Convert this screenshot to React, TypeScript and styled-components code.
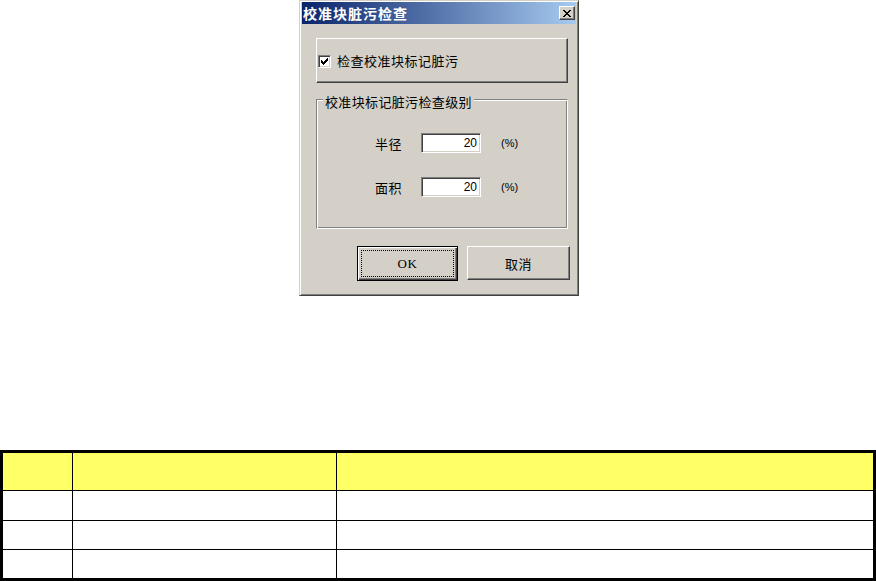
import React from "react";
import styled, { createGlobalStyle } from "styled-components";

const GlobalStyle = createGlobalStyle`
  html, body {
    margin: 0;
    padding: 0;
    background: #ffffff;
  }
  body {
    font-family: "Noto Sans CJK SC", "Liberation Sans", sans-serif;
    color: #000;
  }
`;

const Page = styled.div`
  width: 876px;
  height: 581px;
  display: flex;
  flex-direction: column;
  overflow: hidden;
`;

const Dialog = styled.div`
  width: 280px;
  height: 296px;
  box-sizing: border-box;
  margin-left: 299px;
  background: #d4d0c8;
  border: 1px solid;
  border-color: #d4d0c8 #404040 #404040 #d4d0c8;
  box-shadow: inset 1px 1px 0 #ffffff, inset -1px -1px 0 #808080;
  padding: 1px 2px 2px 2px;
  display: flex;
  flex-direction: column;
`;

const TitleBar = styled.div`
  height: 22px;
  flex-shrink: 0;
  display: flex;
  align-items: center;
  justify-content: space-between;
  padding-left: 1px;
  background: linear-gradient(to right, #0a246a, #a6caf0);
`;

const Title = styled.span`
  color: #ffffff;
  font-size: 14px;
  font-weight: 700;
  letter-spacing: 1px;
  line-height: 22px;
`;

const CloseButton = styled.div`
  width: 16px;
  height: 14px;
  box-sizing: border-box;
  margin-right: 1px;
  background: #d4d0c8;
  border: 1px solid;
  border-color: #ffffff #404040 #404040 #ffffff;
  box-shadow: inset -1px -1px 0 #808080;
  display: flex;
  align-items: center;
  justify-content: center;
`;

const Body = styled.div`
  flex: 1;
  display: flex;
  flex-direction: column;
  padding: 14px 8px 0 14px;
`;

const CheckButton = styled.div`
  height: 45px;
  box-sizing: border-box;
  border: 1px solid;
  border-color: #ffffff #404040 #404040 #ffffff;
  box-shadow: inset -1px -1px 0 #808080;
  display: flex;
  align-items: center;
  padding-left: 1px;
`;

const CheckBox = styled.div`
  width: 13px;
  height: 13px;
  box-sizing: border-box;
  background: #ffffff;
  border: 1px solid;
  border-color: #808080 #ffffff #ffffff #808080;
  box-shadow: inset 1px 1px 0 #404040, inset -1px -1px 0 #d4d0c8;
  display: flex;
  align-items: center;
  justify-content: center;
  margin-top: 1px;
`;

const CheckLabel = styled.span`
  margin-left: 6px;
  font-size: 13px;
  letter-spacing: 0.5px;
  line-height: 15px;
`;

const GroupBox = styled.div`
  margin-top: 16px;
  height: 130px;
  box-sizing: border-box;
  border: 1px solid;
  border-color: #808080 #ffffff #ffffff #808080;
  box-shadow: inset 1px 1px 0 #ffffff, inset -1px -1px 0 #808080;
  display: flex;
  flex-direction: column;
`;

const Legend = styled.span`
  align-self: flex-start;
  margin: -6px 0 0 6px;
  padding: 0 2px;
  background: #d4d0c8;
  font-size: 13px;
  letter-spacing: 0.35px;
  line-height: 15px;
`;

const FieldRow = styled.div<{ $gap: number }>`
  display: flex;
  align-items: center;
  height: 20px;
  margin-top: ${(p) => p.$gap}px;
  padding-left: 58px;
`;

const FieldLabel = styled.span`
  width: 46px;
  font-size: 13px;
  letter-spacing: 0.5px;
`;

const NumberInput = styled.input`
  width: 60px;
  height: 20px;
  box-sizing: border-box;
  margin: 0;
  padding: 0 3px 0 0;
  background: #ffffff;
  border: 1px solid;
  border-color: #808080 #ffffff #ffffff #808080;
  box-shadow: inset 1px 1px 0 #404040, inset -1px -1px 0 #d4d0c8;
  outline: none;
  text-align: right;
  font-family: "Liberation Sans", sans-serif;
  font-size: 12px;
  color: #000;
`;

const Unit = styled.span`
  margin-left: 20px;
  font-family: "Liberation Sans", sans-serif;
  font-size: 11px;
`;

const ButtonRow = styled.div`
  display: flex;
  justify-content: flex-end;
  gap: 9px;
  margin-top: 17px;
  margin-right: -2px;
`;

const DefaultButton = styled.button`
  width: 101px;
  height: 35px;
  box-sizing: border-box;
  margin: 0;
  padding: 3px;
  background: #d4d0c8;
  border: 1px solid #000000;
  box-shadow: inset 1px 1px 0 #ffffff, inset -1px -1px 0 #404040,
    inset -2px -2px 0 #808080;
  display: flex;
`;

const FocusRect = styled.span`
  flex: 1;
  border: 1px dotted #000000;
  display: flex;
  align-items: center;
  justify-content: center;
  font-family: "Liberation Serif", serif;
  font-size: 13px;
  font-weight: 400;
  letter-spacing: 0.5px;
  color: #000;
`;

const PushButton = styled.button`
  width: 103px;
  height: 34px;
  box-sizing: border-box;
  margin: 0;
  padding: 0;
  background: #d4d0c8;
  border: 1px solid;
  border-color: #ffffff #404040 #404040 #ffffff;
  box-shadow: inset -1px -1px 0 #808080;
  font-family: "Noto Sans CJK SC", sans-serif;
  font-size: 13px;
  letter-spacing: 0.5px;
  color: #000;
`;

const Sheet = styled.table`
  margin-top: 154px;
  width: 876px;
  box-sizing: border-box;
  border: 3px solid #000000;
  border-spacing: 0;
  table-layout: fixed;
  flex-shrink: 0;
`;

const Row = styled.tr<{ $h: number }>`
  height: ${(p) => p.$h}px;
`;

const Cell = styled.td<{ $head?: boolean; $last?: boolean; $bottom?: boolean }>`
  padding: 0;
  box-sizing: border-box;
  background: ${(p) => (p.$head ? "#ffff66" : "#ffffff")};
  border-right: ${(p) => (p.$last ? "none" : "1px solid #000000")};
  border-bottom: ${(p) => (p.$bottom ? "none" : "1px solid #000000")};
`;

const colWidths = [70, 264, 536];
const rowHeights = [38, 30, 29, 28];

// classic 7x7 pixel check mark
const CheckMark = () => (
  <svg width="7" height="7" viewBox="0 0 7 7" shapeRendering="crispEdges">
    <path
      d="M0 2h1v3H0z M1 3h1v3H1z M2 4h1v3H2z M3 3h1v3H3z M4 2h1v3H4z M5 1h1v3H5z M6 0h1v3H6z"
      fill="#000"
    />
  </svg>
);

const CloseGlyph = () => (
  <svg width="8" height="7" viewBox="0 0 8 7" shapeRendering="crispEdges">
    <path
      d="M0 0h2v1h1v1h2V1h1V0h2v1H7v1H6v1H5v1h1v1h1v1h1v1H6V6H5V5H3v1H2v1H0V6h1V5h1V4h1V3H2V2H1V1H0z"
      fill="#000"
    />
  </svg>
);

export default function App() {
  return (
    <Page>
      <GlobalStyle />
      <Dialog>
        <TitleBar>
          <Title>校准块脏污检查</Title>
          <CloseButton>
            <CloseGlyph />
          </CloseButton>
        </TitleBar>
        <Body>
          <CheckButton>
            <CheckBox>
              <CheckMark />
            </CheckBox>
            <CheckLabel>检查校准块标记脏污</CheckLabel>
          </CheckButton>
          <GroupBox>
            <Legend>校准块标记脏污检查级别</Legend>
            <FieldRow $gap={24}>
              <FieldLabel>半径</FieldLabel>
              <NumberInput readOnly defaultValue="20" />
              <Unit>(%)</Unit>
            </FieldRow>
            <FieldRow $gap={24}>
              <FieldLabel>面积</FieldLabel>
              <NumberInput readOnly defaultValue="20" />
              <Unit>(%)</Unit>
            </FieldRow>
          </GroupBox>
          <ButtonRow>
            <DefaultButton>
              <FocusRect>OK</FocusRect>
            </DefaultButton>
            <PushButton>取消</PushButton>
          </ButtonRow>
        </Body>
      </Dialog>
      <Sheet>
        <colgroup>
          {colWidths.map((w, i) => (
            <col key={i} style={{ width: w }} />
          ))}
        </colgroup>
        <tbody>
          {rowHeights.map((h, r) => (
            <Row key={r} $h={h}>
              {colWidths.map((_, c) => (
                <Cell
                  key={c}
                  $head={r === 0}
                  $last={c === colWidths.length - 1}
                  $bottom={r === rowHeights.length - 1}
                />
              ))}
            </Row>
          ))}
        </tbody>
      </Sheet>
    </Page>
  );
}
